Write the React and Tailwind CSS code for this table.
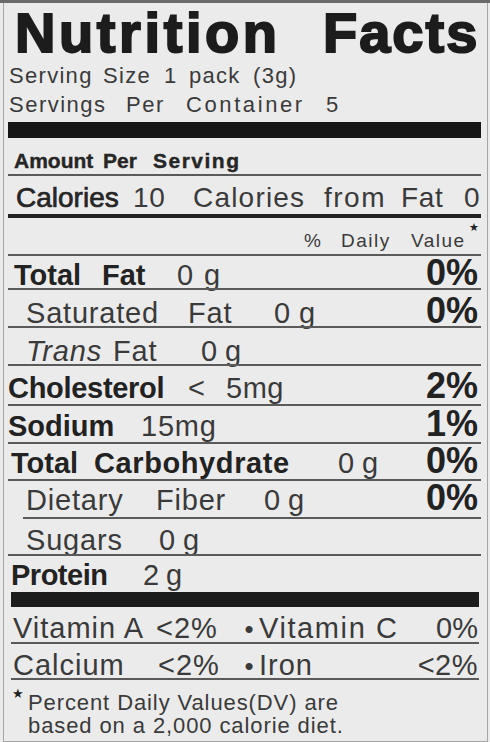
import React from "react";

const LINE = "h-[2px] bg-[#5a5a5a]";

export default function App() {
  return (
    <div className="w-[490px] h-[742px] bg-[#ebebeb] overflow-hidden font-['Liberation_Sans',Arial,sans-serif] text-[#3a3a3a] flex flex-col">
      <div className="h-[3px] bg-[#6a6a6a] shrink-0" />
      <div className="flex-1 ml-[3px] w-[485px] border-l border-r border-b border-[#a5a5a5] flex flex-col">
        <div className="ml-[4px] w-[473px] flex flex-col">
          {/* Title */}
          <div className="h-[59px] leading-[59px] text-[56px] font-bold text-[#1c1c1c] flex whitespace-nowrap [-webkit-text-stroke:2px_#1c1c1c]">
            <span className="ml-[7px] w-[308px] shrink-0 tracking-[3.6px]">Nutrition</span>
            <span className="shrink-0 tracking-[2px]">Facts</span>
          </div>
          {/* Serving size */}
          <div className="h-[27px] leading-[27px] text-[22px] tracking-[1.3px] flex whitespace-nowrap">
            <span className="ml-[1px] w-[94px] shrink-0">Serving</span>
            <span className="w-[61px] shrink-0">Size</span>
            <span className="w-[25px] shrink-0">1</span>
            <span className="w-[64px] shrink-0">pack</span>
            <span className="shrink-0">(3g)</span>
          </div>
          <div className="h-[33px] leading-[31px] text-[22px] tracking-[1.5px] flex whitespace-nowrap">
            <span className="ml-[1px] w-[117px] shrink-0">Servings</span>
            <span className="w-[60px] shrink-0">Per</span>
            <span className="w-[140px] shrink-0 tracking-[2.6px]">Container</span>
            <span className="shrink-0">5</span>
          </div>
          <div className="h-[16px] bg-[#161616]" />

          {/* Amount per serving */}
          <div className="h-[36px] pt-[12px] flex text-[21px] leading-none font-bold text-[#252525] whitespace-nowrap [-webkit-text-stroke:0.4px_#252525]">
            <span className="ml-[6px] w-[89px] shrink-0">Amount</span>
            <span className="w-[50px] shrink-0">Per</span>
            <span className="shrink-0 tracking-[1.5px]">Serving</span>
          </div>
          <div className={LINE} />

          {/* Calories */}
          <div className="h-[38px] pt-[8px] flex items-baseline text-[28px] leading-none whitespace-nowrap tracking-[0.6px]">
            <span className="ml-[8px] w-[117px] shrink-0 text-[#252525] [-webkit-text-stroke:0.7px_#252525] tracking-[0px]">Calories</span>
            <span className="w-[60px] shrink-0">10</span>
            <span className="w-[131px] shrink-0 tracking-[1.2px]">Calories</span>
            <span className="w-[77px] shrink-0 tracking-[1.5px]">from</span>
            <span className="w-[63px] shrink-0">Fat</span>
            <span className="shrink-0">0</span>
          </div>
          <div className="h-[4px] bg-[#222222]" />

          {/* % Daily Value */}
          <div className="h-[36px] flex items-start whitespace-nowrap">
            <div className="pt-[13px] flex text-[19px] leading-none tracking-[1.5px]">
              <span className="ml-[296px] w-[37px] shrink-0">%</span>
              <span className="w-[70px] shrink-0">Daily</span>
              <span className="w-[58px] shrink-0">Value</span>
            </div>
            <span className="pt-[4px] text-[11px] leading-none text-[#222] font-['DejaVu_Sans',sans-serif]">★</span>
          </div>
          <div className={LINE} />

          {/* Total Fat */}
          <div className="h-[32px] pt-[3px] flex items-baseline text-[29px] leading-none whitespace-nowrap">
            <span className="ml-[6px] w-[88px] shrink-0 font-bold text-[#222]">Total</span>
            <span className="w-[75px] shrink-0 font-bold text-[#222]">Fat</span>
            <span className="w-[27px] shrink-0">0</span>
            <span className="shrink-0">g</span>
            <span className="ml-auto mr-[3px] text-[36px] leading-[28px] font-bold text-[#222]">0%</span>
          </div>
          <div className={LINE} />

          {/* Saturated Fat */}
          <div className="h-[36px] pt-[7px] flex items-baseline text-[29px] leading-none whitespace-nowrap tracking-[0.8px]">
            <span className="ml-[18px] w-[162px] shrink-0">Saturated</span>
            <span className="w-[86px] shrink-0">Fat</span>
            <span className="w-[25px] shrink-0">0</span>
            <span className="shrink-0">g</span>
            <span className="ml-auto mr-[3px] text-[36px] leading-[28px] font-bold text-[#222] tracking-normal">0%</span>
          </div>
          <div className={LINE} />

          {/* Trans Fat */}
          <div className="h-[36px] pt-[9px] flex items-baseline text-[29px] leading-none whitespace-nowrap tracking-[0.8px]">
            <span className="ml-[18px] w-[87px] shrink-0 italic">Trans</span>
            <span className="w-[88px] shrink-0">Fat</span>
            <span className="w-[24px] shrink-0">0</span>
            <span className="shrink-0">g</span>
          </div>
          <div className={LINE} />

          {/* Cholesterol */}
          <div className="h-[38px] pt-[6px] flex items-baseline text-[29px] leading-none whitespace-nowrap">
            <span className="ml-[0px] w-[180px] shrink-0 font-bold text-[#222] tracking-[-0.3px]">Cholesterol</span>
            <span className="w-[38px] shrink-0">&lt;</span>
            <span className="shrink-0 tracking-[0.5px]">5mg</span>
            <span className="ml-auto mr-[3px] text-[36px] leading-[28px] font-bold text-[#222]">2%</span>
          </div>
          <div className={LINE} />

          {/* Sodium */}
          <div className="h-[36px] pt-[4px] flex items-baseline text-[29px] leading-none whitespace-nowrap">
            <span className="ml-[0px] w-[133px] shrink-0 font-bold text-[#222]">Sodium</span>
            <span className="shrink-0 tracking-[0.8px]">15mg</span>
            <span className="ml-auto mr-[3px] text-[36px] leading-[28px] font-bold text-[#222]">1%</span>
          </div>
          <div className={LINE} />

          {/* Total Carbohydrate */}
          <div className="h-[35px] pt-[3px] flex items-baseline text-[29px] leading-none whitespace-nowrap">
            <span className="ml-[3px] w-[83px] shrink-0 font-bold text-[#222]">Total</span>
            <span className="w-[244px] shrink-0 font-bold text-[#222] tracking-[0.6px]">Carbohydrate</span>
            <span className="w-[24px] shrink-0">0</span>
            <span className="shrink-0">g</span>
            <span className="ml-auto mr-[3px] text-[36px] leading-[28px] font-bold text-[#222]">0%</span>
          </div>
          <div className={LINE} />

          {/* Dietary Fiber */}
          <div className="h-[36px] pt-[3px] flex items-baseline text-[29px] leading-none whitespace-nowrap tracking-[0.8px]">
            <span className="ml-[18px] w-[130px] shrink-0">Dietary</span>
            <span className="w-[108px] shrink-0">Fiber</span>
            <span className="w-[24px] shrink-0">0</span>
            <span className="shrink-0">g</span>
            <span className="ml-auto mr-[3px] text-[36px] leading-[28px] font-bold text-[#222] tracking-normal">0%</span>
          </div>
          <div className="ml-[15px] h-[2px] bg-[#5a5a5a]" />

          {/* Sugars */}
          <div className="h-[35px] pt-[7px] flex items-baseline text-[29px] leading-none whitespace-nowrap tracking-[0.8px]">
            <span className="ml-[18px] w-[133px] shrink-0">Sugars</span>
            <span className="w-[24px] shrink-0">0</span>
            <span className="shrink-0">g</span>
          </div>
          <div className={LINE} />

          {/* Protein */}
          <div className="h-[36px] pt-[5px] flex items-baseline text-[29px] leading-none whitespace-nowrap">
            <span className="ml-[3px] w-[132px] shrink-0 font-bold text-[#222] tracking-[-0.5px]">Protein</span>
            <span className="w-[23px] shrink-0">2</span>
            <span className="shrink-0">g</span>
          </div>
          <div className="ml-[3px] w-[468px] h-[15px] bg-[#1c1c1c]" />

          {/* Vitamins */}
          <div className="h-[35px] pt-[7px] flex items-baseline text-[29px] leading-none whitespace-nowrap tracking-[1px]">
            <span className="ml-[5px] w-[143px] shrink-0">Vitamin A</span>
            <span className="w-[83px] shrink-0">&lt;2%</span>
            <span className="w-[20px] shrink-0 text-center text-[26px] tracking-normal">•</span>
            <span className="w-[177px] shrink-0 tracking-[1.6px]">Vitamin C</span>
            <span className="ml-auto mr-[3px] tracking-normal">0%</span>
          </div>
          <div className="ml-[3px] w-[468px] h-[2px] bg-[#5a5a5a]" />

          <div className="h-[34px] pt-[7px] flex items-baseline text-[29px] leading-none whitespace-nowrap tracking-[1px]">
            <span className="ml-[5px] w-[145px] shrink-0">Calcium</span>
            <span className="w-[81px] shrink-0">&lt;2%</span>
            <span className="w-[20px] shrink-0 text-center text-[26px] tracking-normal">•</span>
            <span className="shrink-0">Iron</span>
            <span className="ml-auto mr-[3px] tracking-[0.5px]">&lt;2%</span>
          </div>
          <div className="ml-[3px] w-[468px] h-[2px] bg-[#5a5a5a]" />

          {/* Footnote */}
          <div className="pt-[7px] flex items-start whitespace-nowrap">
            <span className="ml-[4px] w-[16px] shrink-0 text-[13px] leading-none text-[#222] font-['DejaVu_Sans',sans-serif]">★</span>
            <div className="pt-[4px] text-[22px] leading-[23px] tracking-[0.9px]">
              <div>Percent Daily Values(DV) are</div>
              <div>based on a 2,000 calorie diet.</div>
            </div>
          </div>
        </div>
      </div>
    </div>
  );
}
